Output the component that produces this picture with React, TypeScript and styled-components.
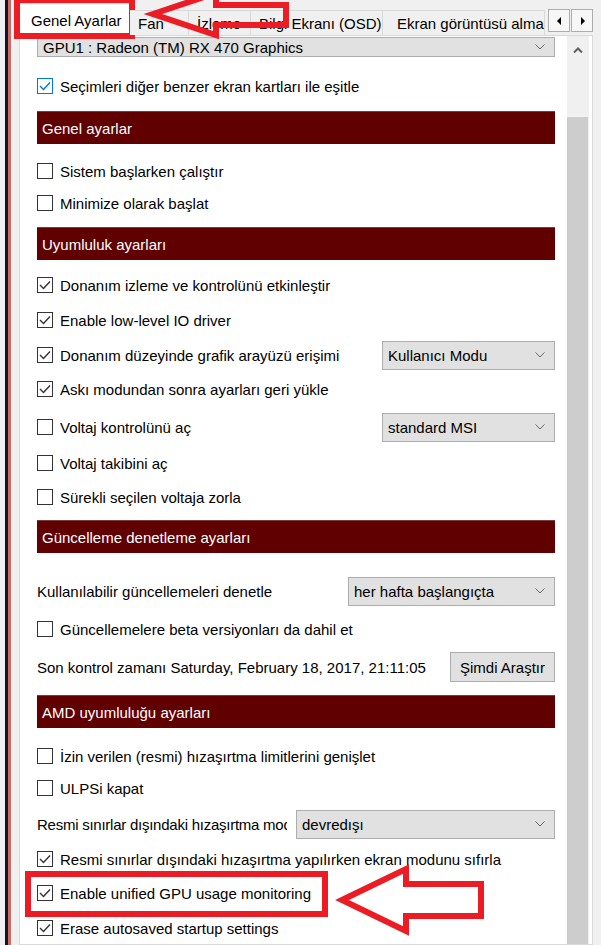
import React from 'react';
import styled, { createGlobalStyle } from 'styled-components';

const GlobalStyle = createGlobalStyle`
  html, body {
    margin: 0;
    padding: 0;
    background: #f0f0f0;
  }
  body {
    font-family: "Liberation Sans", Arial, sans-serif;
    font-size: 15px;
    color: #000;
  }
  * {
    box-sizing: border-box;
  }
`;

const RED = '#ec1c24';

const Screen = styled.div`
  position: relative;
  width: 601px;
  height: 945px;
  overflow: hidden;
  display: flex;
  background: #f0f0f0;
`;

// edge of the window lying behind the dialog
const BackWindowEdge = styled.div`
  width: 11px;
  flex-shrink: 0;
  background: linear-gradient(to right, #eef0f5 0 5px, #151515 5px 8px, #c86b6b 8px 11px);
`;

const Dialog = styled.div`
  flex: 1;
  min-width: 0;
  display: flex;
  flex-direction: column;
  padding: 0 8px;
`;

const TabStrip = styled.div`
  position: relative;
  z-index: 2;
  height: 36px;
  flex-shrink: 0;
  display: flex;
  align-items: flex-end;
`;

const Tab = styled.div<{ $active?: boolean; $width: number; $pad: number }>`
  position: relative;
  flex-shrink: 0;
  width: ${p => p.$width}px;
  height: ${p => (p.$active ? 33 : 25)}px;
  margin-bottom: ${p => (p.$active ? 0 : 1)}px;
  padding-left: ${p => p.$pad}px;
  display: flex;
  align-items: center;
  white-space: nowrap;
  overflow: ${p => (p.$active ? 'visible' : 'hidden')};
  background: ${p => (p.$active ? '#fff' : '#f0f0f0')};
  border-top: 1px solid #d9d9d9;
  border-right: 1px solid #d9d9d9;
  border-left: ${p => (p.$active ? '1px solid #d9d9d9' : 'none')};
`;

const TabCallout = styled.div`
  position: absolute;
  left: -6px;
  top: -7px;
  width: 121px;
  height: 42px;
  border: 6px solid ${RED};
  pointer-events: none;
`;

const TabScrollButtons = styled.div`
  align-self: flex-start;
  margin: 9px 0 0 3px;
  display: flex;
  gap: 1px;
`;

const TabScrollButton = styled.div`
  width: 22px;
  height: 23px;
  border: 1px solid #adadad;
  background: #f7f7f7;
  display: flex;
  align-items: center;
  justify-content: center;
`;

const Panel = styled.div`
  flex: 1;
  margin-top: -1px;
  display: flex;
  background: #fff;
  border: 1px solid #d9d9d9;
`;

const Content = styled.div`
  flex: 1;
  min-width: 0;
  padding: 0 12px 0 17px;
  display: flex;
  flex-direction: column;
  overflow: hidden;
`;

const Scrollbar = styled.div`
  width: 22px;
  flex-shrink: 0;
  margin-right: 3px;
  background: #f0f0f0;
  display: flex;
  flex-direction: column;
`;

const ScrollUp = styled.div`
  height: 28px;
  display: flex;
  align-items: center;
  justify-content: center;
`;

const ScrollThumb = styled.div`
  flex: 1;
  margin: 53px 1px 0 0;
  background: #cdcdcd;
`;

const Row = styled.div<{ $mt?: number }>`
  position: relative;
  flex-shrink: 0;
  height: 32px;
  margin-top: ${p => p.$mt ?? 3}px;
  display: flex;
  align-items: center;
`;

const SectionHeader = styled.div<{ $mt: number }>`
  flex-shrink: 0;
  height: 33px;
  margin-top: ${p => p.$mt}px;
  padding-left: 5px;
  display: flex;
  align-items: center;
  background: #600000;
  border-top: 1px solid #7c3a3a;
  color: #fff;
`;

const Box = styled.span<{ $focus?: boolean }>`
  width: 16px;
  height: 16px;
  flex-shrink: 0;
  margin-right: 7px;
  border: 1px solid ${p => (p.$focus ? '#0078d7' : '#333')};
  background: #fff;
  display: flex;
  align-items: center;
  justify-content: center;
`;

const Label = styled.span`
  white-space: nowrap;
`;

const ClippedLabel = styled.span`
  width: 250px;
  flex-shrink: 0;
  margin-right: 9px;
  white-space: nowrap;
  overflow: hidden;
  letter-spacing: -0.25px;
`;

const Combo = styled.div<{ $width?: number; $short?: boolean }>`
  ${p => (p.$width ? `width: ${p.$width}px; flex-shrink: 0; margin-left: auto;` : 'flex: 1;')}
  height: ${p => (p.$short ? 24 : 29)}px;
  margin-top: ${p => (p.$short ? 1 : 0)}px;
  padding: 0 9px 0 5px;
  display: flex;
  align-items: center;
  justify-content: space-between;
  background: #e1e1e1;
  border: 1px solid #adadad;
  white-space: nowrap;
`;

const Button = styled.div`
  width: 105px;
  height: 30px;
  margin-left: auto;
  display: flex;
  align-items: center;
  justify-content: center;
  background: #e1e1e1;
  border: 1px solid #adadad;
  white-space: nowrap;
`;

const RowCallout = styled.div`
  position: absolute;
  left: -12px;
  top: -6px;
  width: 303px;
  height: 46px;
  border: 6px solid ${RED};
  pointer-events: none;
`;

const PointerSvg = styled.svg`
  position: absolute;
  z-index: 5;
  overflow: visible;
  pointer-events: none;
`;

const TabPointer = styled(PointerSvg)`
  left: 140px;
  top: -12px;
`;

const RowPointer = styled(PointerSvg)`
  left: 325px;
  top: 860px;
`;

const Chevron = () => (
  <svg width="10" height="6" viewBox="0 0 10 6">
    <polyline points="0.5,0.5 5,5 9.5,0.5" fill="none" stroke="#666" strokeWidth="1" />
  </svg>
);

const Check = ({ color }: { color: string }) => (
  <svg width="12" height="10" viewBox="0 0 12 10">
    <polyline points="1,5 4.5,8.5 11,1.5" fill="none" stroke={color} strokeWidth="1.4" />
  </svg>
);

const CheckBox = ({ checked, focus }: { checked?: boolean; focus?: boolean }) => (
  <Box $focus={focus}>{checked && <Check color={focus ? '#0078d7' : '#333'} />}</Box>
);

const CheckRow = ({ text, checked, focus, mt }: { text: string; checked?: boolean; focus?: boolean; mt?: number }) => (
  <Row $mt={mt}>
    <CheckBox checked={checked} focus={focus} />
    <Label>{text}</Label>
  </Row>
);

const tabs = [
  { label: 'Genel Ayarlar', width: 111, pad: 11, active: true },
  { label: 'Fan', width: 59, pad: 8 },
  { label: 'İzleme', width: 62, pad: 8 },
  { label: 'Bilgi Ekranı (OSD)', width: 132, pad: 8 },
  { label: 'Ekran görüntüsü alma', width: 162, pad: 14 },
];

const App: React.FC = () => {
  return (
    <Screen>
      <GlobalStyle />
      <BackWindowEdge />
      <Dialog>
        <TabStrip>
          {tabs.map(t => (
            <Tab key={t.label} $active={t.active} $width={t.width} $pad={t.pad}>
              {t.label}
              {t.active && <TabCallout />}
            </Tab>
          ))}
          <TabScrollButtons>
            <TabScrollButton>
              <svg width="5" height="8" viewBox="0 0 5 8"><polygon points="4,0 0,4 4,8" fill="#000" /></svg>
            </TabScrollButton>
            <TabScrollButton>
              <svg width="5" height="8" viewBox="0 0 5 8"><polygon points="1,0 5,4 1,8" fill="#000" /></svg>
            </TabScrollButton>
          </TabScrollButtons>
        </TabStrip>

        <Panel>
          <Content>
            <Combo $short>
              <span>GPU1 : Radeon (TM) RX 470 Graphics</span>
              <Chevron />
            </Combo>
            <CheckRow mt={13} checked focus text="Seçimleri diğer benzer ekran kartları ile eşitle" />

            <SectionHeader $mt={9}>Genel ayarlar</SectionHeader>
            <CheckRow mt={11} text="Sistem başlarken çalıştır" />
            <CheckRow mt={0} text="Minimize olarak başlat" />

            <SectionHeader $mt={8}>Uyumluluk ayarları</SectionHeader>
            <CheckRow mt={9} checked text="Donanım izleme ve kontrolünü etkinleştir" />
            <CheckRow checked text="Enable low-level IO driver" />
            <Row>
              <CheckBox checked />
              <Label>Donanım düzeyinde grafik arayüzü erişimi</Label>
              <Combo $width={173}>
                <span>Kullanıcı Modu</span>
                <Chevron />
              </Combo>
            </Row>
            <CheckRow mt={2} checked text="Askı modundan sonra ayarları geri yükle" />
            <Row $mt={6}>
              <CheckBox />
              <Label>Voltaj kontrolünü aç</Label>
              <Combo $width={173}>
                <span>standard MSI</span>
                <Chevron />
              </Combo>
            </Row>
            <CheckRow mt={4} text="Voltaj takibini aç" />
            <CheckRow mt={2} text="Sürekli seçilen voltaja zorla" />

            <SectionHeader $mt={7}>Güncelleme denetleme ayarları</SectionHeader>
            <Row $mt={22}>
              <Label>Kullanılabilir güncellemeleri denetle</Label>
              <Combo $width={207}>
                <span>her hafta başlangıçta</span>
                <Chevron />
              </Combo>
            </Row>
            <CheckRow mt={6} text="Güncellemelere beta versiyonları da dahil et" />
            <Row $mt={6}>
              <Label>Son kontrol zamanı Saturday, February 18, 2017, 21:11:05</Label>
              <Button>Şimdi Araştır</Button>
            </Row>

            <SectionHeader $mt={12}>AMD uyumluluğu ayarları</SectionHeader>
            <CheckRow mt={12} text="İzin verilen (resmi) hızaşırtma limitlerini genişlet" />
            <CheckRow mt={0} text="ULPSi kapat" />
            <Row $mt={4}>
              <ClippedLabel>Resmi sınırlar dışındaki hızaşırtma modu</ClippedLabel>
              <Combo>
                <span>devredışı</span>
                <Chevron />
              </Combo>
            </Row>
            <CheckRow checked text="Resmi sınırlar dışındaki hızaşırtma yapılırken ekran modunu sıfırla" />
            <Row $mt={2}>
              <CheckBox checked />
              <Label>Enable unified GPU usage monitoring</Label>
              <RowCallout />
            </Row>
            <CheckRow checked text="Erase autosaved startup settings" />
          </Content>

          <Scrollbar>
            <ScrollUp>
              <svg width="10" height="6" viewBox="0 0 10 6">
                <polyline points="1,5.5 5,1.5 9,5.5" fill="none" stroke="#606060" strokeWidth="2" />
              </svg>
            </ScrollUp>
            <ScrollThumb />
          </Scrollbar>
        </Panel>
      </Dialog>

      <TabPointer width="155" height="52" viewBox="140 -12 155 52">
        <polygon
          points="153,14 216,-7 216,5 286,5 286,25 216,25 216,35"
          fill="none"
          stroke={RED}
          strokeWidth="6"
          strokeLinejoin="miter"
        />
      </TabPointer>
      <RowPointer width="165" height="80" viewBox="325 858 165 80">
        <polygon
          points="342,898 406,867 406,882 481,882 481,914 406,914 406,929"
          fill="none"
          stroke={RED}
          strokeWidth="6"
          strokeLinejoin="miter"
        />
      </RowPointer>
    </Screen>
  );
};

export default App;
